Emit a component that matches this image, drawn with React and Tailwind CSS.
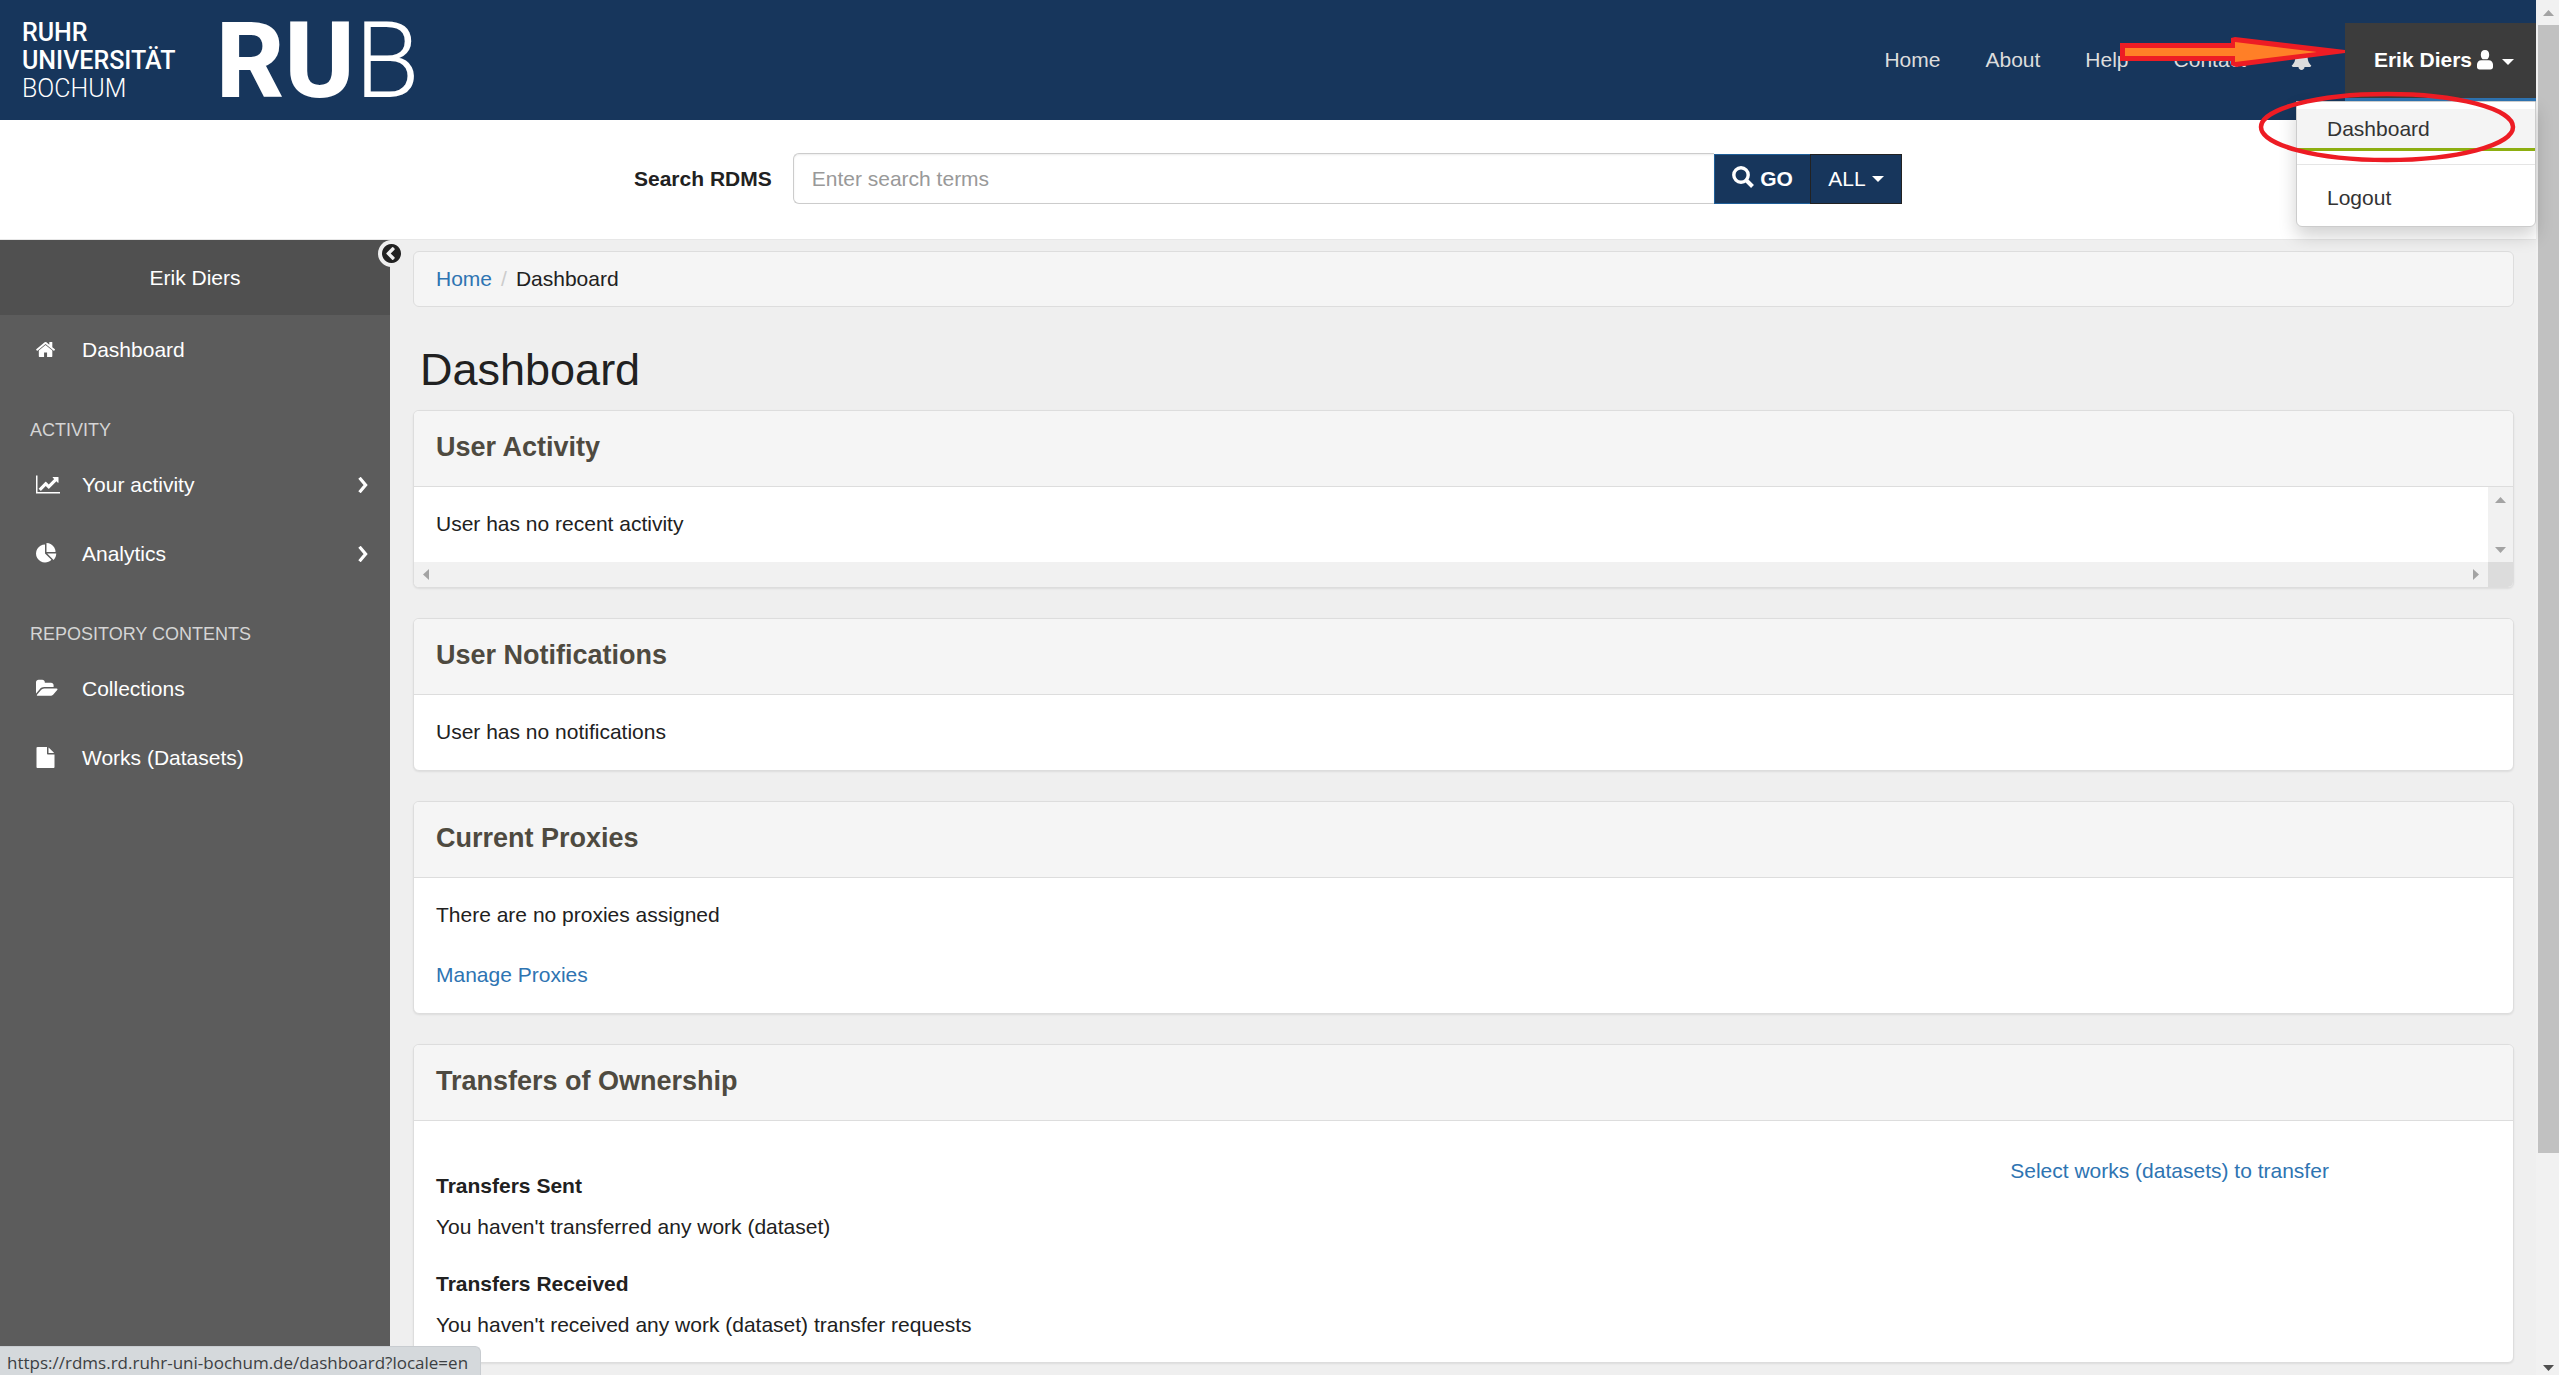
const icons = {
  home: {
    box: '80 0 1792 1792',
    d: 'M1472 992v480q0 26-19 45t-45 19h-384v-384h-256v384h-384q-26 0-45-19t-19-45v-480q0-1 .5-3t.5-3l575-474 575 474q1 2 1 6zm223-69l-62 74q-8 9-21 11h-3q-13 0-21-7l-692-577-692 577q-12 8-24 7-13-2-21-11l-62-74q-8-10-7-23.5t11-21.5l719-599q32-26 76-26t76 26l244 204v-195q0-14 9-23t23-9h192q14 0 23 9t9 23v408l219 182q10 8 11 21.5t-7 23.5z',
  },
  lineChart: {
    box: '0 0 2048 1792',
    d: 'M2048 1536v128h-2048v-1536h128v1408h1920zm-128-1248v435q0 21-19.5 29.5t-35.5-7.5l-121-121-633 633q-10 10-23 10t-23-10l-233-233-416 416-192-192 585-585q10-10 23-10t23 10l233 233 464-464-121-121q-16-16-7.5-35.5t29.5-19.5h435q14 0 23 9t9 23z',
  },
  pieChart: {
    box: '0 0 1792 1792',
    d: 'M768 890l546 546q-106 108-247.5 168t-298.5 60q-209 0-385.5-103t-279.5-279.5-103-385.5 103-385.5 279.5-279.5 385.5-103v762zm187 6h773q0 157-60 298.5t-168 247.5zm709-128h-768v-768q209 0 385.5 103t279.5 279.5 103 385.5z',
  },
  folderOpen: {
    box: '0 0 1920 1792',
    d: 'M1879 952q0 31-31 66l-336 396q-43 51-120.5 86.5t-143.5 35.5h-1088q-34 0-60.5-13t-26.5-43q0-31 31-66l336-396q43-51 120.5-86.5t143.5-35.5h1088q34 0 60.5 13t26.5 43zm-343-344v160h-832q-94 0-197 47.5t-164 119.5l-337 396-5 6q0-4-.5-12.5t-.5-12.5v-960q0-92 66-158t158-66h320q92 0 158 66t66 158v32h544q92 0 158 66t66 158z',
  },
  file: {
    box: '128 0 1536 1792',
    d: 'M1152 512v-472q22 14 36 28l408 408q14 14 28 36h-472zm-128 32q0 40 28 68t68 28h544v1056q0 40-28 68t-68 28h-1344q-40 0-68-28t-28-68v-1600q0-40 28-68t68-28h800v544z',
  },
  bell: {
    box: '0 0 1792 1792',
    d: 'M1728 1408q0 52-38 90t-90 38h-448q0 106-75 181t-181 75-181-75-75-181h-448q-52 0-90-38t-38-90q50-42 91-88t85-119.5 74.5-158.5 50-206 19.5-260q0-152 117-282.5t307-158.5q-8-19-8-39 0-40 28-68t68-28 68 28 28 68q0 20-8 39 190 28 307 158.5t117 282.5q0 139 19.5 260t50 206 74.5 158.5 85 119.5 91 88z',
  },
  circleLeft: {
    box: '128 128 1536 1536',
    d: 'M1037 1395l102-102q19-19 19-45t-19-45l-307-307 307-307q19-19 19-45t-19-45l-102-102q-19-19-45-19t-45 19l-454 454q-19 19-19 45t19 45l454 454q19 19 45 19t45-19zm627-499q0 209-103 385.5t-279.5 279.5-385.5 103-385.5-103-279.5-279.5-103-385.5 103-385.5 279.5-279.5 385.5-103 385.5 103 279.5 279.5 103 385.5z',
  },
};

const Icon = ({ name, className }) => (
  <svg viewBox={icons[name].box} fill="currentColor" className={className} aria-hidden="true">
    <path d={icons[name].d} />
  </svg>
);

const Caret = () => (
  <svg viewBox="0 0 12 6" className="w-3 h-[6px]" fill="currentColor" aria-hidden="true">
    <path d="M0 0h12L6 6z" />
  </svg>
);

const Triangle = ({ d }) => (
  <svg viewBox="0 0 11 11" className="w-[11px] h-[11px]" fill="currentColor" aria-hidden="true">
    <path d={d} />
  </svg>
);

const UP = 'M0 9L5.5 3L11 9z';
const DOWN = 'M0 3L5.5 9L11 3z';
const LEFT = 'M8 0L2 5.500L8 11z';
const RIGHT = 'M3 0L9 5.500L3 11z';

const Header = () => (
  <header className="relative h-[120px] shrink-0 bg-[#17365c] flex items-start justify-between">
    <a href="#" className="flex pl-[22px] h-full font-[Roboto,sans-serif] text-white">
      <span className="w-[194px] pt-[19px] text-[25px] leading-7 font-medium">
        RUHR<br />UNIVERSITÄT<br /><span className="font-light">BOCHUM</span>
      </span>
      <span className="text-[106px] leading-[122px] font-extrabold">
        RU<span className="font-light">B</span>
      </span>
    </a>

    <nav className="flex pt-[23px] text-[#dddddd]">
      <div className="flex items-center gap-[45px] h-[73px] pr-[33px]">
        <a href="#">Home</a>
        <a href="#">About</a>
        <a href="#">Help</a>
        <a href="#">Contact</a>
        <a href="#" aria-label="Notifications">
          <Icon name="bell" className="w-[21px] h-[21px]" />
        </a>
      </div>
      <div className="relative">
        <button className="flex items-center h-[78px] pb-[2px] pl-[29px] pr-[22px] bg-[#3c3c3c] border-b-3 border-[#2e74b2] text-white font-bold">
          Erik Diers
          <svg viewBox="0 0 16 20" className="w-4 h-5 ml-[5px]" fill="currentColor" aria-hidden="true">
            <path d="M8 0c2.800 0 4.200 2.100 4.200 4.700 0 2-.8 3.700-1.900 4.600h-4.600C4.600 8.400 3.800 6.700 3.800 4.700 3.800 2.100 5.200 0 8 0zM4.200 10.200h7.600c2.400 0 4.200 2 4.200 4.300v2.500c0 1.600-1 2.500-2.500 2.500h-11C1 19.500 0 18.600 0 17v-2.500c0-2.300 1.800-4.300 4.200-4.300z" />
          </svg>
          <span className="ml-[9px] mt-1"><Caret /></span>
        </button>
        <ul className="absolute z-10 top-[78px] right-0 w-60 pt-[7px] pb-[6px] bg-white border border-[#cccccc] rounded-b-md shadow-[0_9px_18px_rgba(0,0,0,0.18)] text-[#333333]">
          <li>
            <a href="#" className="block px-[30px] leading-[39px] bg-[#f4f4f4] border-b-3 border-[#8dae10]">Dashboard</a>
          </li>
          <li className="my-[13px] h-px bg-[#e5e5e5]" />
          <li>
            <a href="#" className="block px-[30px] leading-[39px] border-b-3 border-transparent">Logout</a>
          </li>
        </ul>
      </div>
    </nav>

    {/* arrow and ellipse highlighting the dashboard entry */}
    <svg viewBox="0 0 440 170" className="absolute z-20 top-0 right-0 w-[440px] h-[170px] pointer-events-none" aria-hidden="true">
      <path d="M24 43H135V38L139 37L249 50V53L140 67L135 65V61H24z" fill="#ed1c24" />
      <path d="M29 48H139V42L221 52L139 62V56H29z" fill="#ff7f27" />
      <ellipse cx="291" cy="127" rx="126" ry="33" fill="none" stroke="#ed1c24" strokeWidth="4.500" />
    </svg>
  </header>
);

const SearchBar = () => (
  <div className="h-[120px] shrink-0 bg-white border-b border-[#e7e7e7]">
    <form className="w-1/2 mx-auto pt-[33px] flex items-start">
      <label htmlFor="search" className="pr-[21px] leading-[51px] font-bold whitespace-nowrap">Search RDMS</label>
      <input
        id="search"
        type="text"
        placeholder="Enter search terms"
        className="flex-1 min-w-0 h-[51px] px-[18px] bg-white border border-r-0 border-[#cccccc] rounded-l-md shadow-[inset_0_1px_2px_rgba(0,0,0,0.08)] placeholder:text-[#999999]"
      />
      <button type="button" className="mt-px h-[50px] w-24 flex items-center justify-center gap-[6px] bg-[#17365c] border border-r-0 border-[#1f5f98] text-white font-bold">
        <svg viewBox="0 0 22 22" className="w-[22px] h-[22px] mb-1" fill="none" stroke="currentColor" aria-hidden="true">
          <circle cx="9" cy="9" r="7.200" strokeWidth="3.400" />
          <path d="M14 14L20.500 20.500" strokeWidth="4" />
        </svg>
        GO
      </button>
      <button type="button" className="mt-px h-[50px] w-[92px] flex items-center justify-center gap-[6px] bg-[#17365c] border border-[#222222] text-white">
        ALL
        <Caret />
      </button>
    </form>
  </div>
);

const SideLink = ({ icon, size, label, expandable }) => (
  <li>
    <a href="#" className="flex items-center h-[69px] pl-9 pr-[22px]">
      <span className="w-[46px]">
        <Icon name={icon} className={size} />
      </span>
      <span className="flex-1">{label}</span>
      {expandable && (
        <svg viewBox="0 0 10 16" className="w-[10px] h-4" fill="none" stroke="currentColor" strokeWidth="3.200" aria-hidden="true">
          <path d="M1.500 .8L7.600 8L1.500 15.200" />
        </svg>
      )}
    </a>
  </li>
);

const SideHeading = ({ children }) => (
  <li className="pl-[30px] pt-[31px] pb-[5px] text-[18px] leading-[30px] text-[#d5d5d5]">{children}</li>
);

const Sidebar = () => (
  <aside className="relative w-[390px] shrink-0 bg-[#5c5c5c] text-white">
    <div className="h-[75px] leading-[75px] text-center bg-[#505050]">Erik Diers</div>
    <button aria-label="Collapse menu" className="absolute top-0 right-[-15px] w-[27px] h-[27px] rounded-full bg-[#efefef] flex items-center justify-center text-[#212121]">
      <Icon name="circleLeft" className="w-[19px] h-[19px]" />
    </button>
    <ul>
      <SideLink icon="home" size="w-[21px] h-[21px]" label="Dashboard" />
      <SideHeading>ACTIVITY</SideHeading>
      <SideLink icon="lineChart" size="w-6 h-[21px]" label="Your activity" expandable />
      <SideLink icon="pieChart" size="w-[21px] h-[21px]" label="Analytics" expandable />
      <SideHeading>REPOSITORY CONTENTS</SideHeading>
      <SideLink icon="folderOpen" size="w-[22px] h-[21px]" label="Collections" />
      <SideLink icon="file" size="w-[19px] h-[21px]" label="Works (Datasets)" />
    </ul>
  </aside>
);

const Panel = ({ title, children }) => (
  <section className="mb-[30px] bg-white border border-[#dddddd] rounded-md overflow-hidden shadow-[0_1px_2px_rgba(0,0,0,0.08)]">
    <h2 className="px-[22px] pt-[21px] pb-6 bg-[#f5f5f5] border-b border-[#dddddd] text-[27px] leading-[30px] font-bold text-[#4e4a40]">
      {title}
    </h2>
    {children}
  </section>
);

const Content = () => (
  <main className="flex-1 min-w-0 pl-[23px] pr-[22px] pt-[11px]">
    <nav className="flex px-[22px] py-3 bg-[#f5f5f5] border border-[#dddddd] rounded-md">
      <a href="#" className="text-[#2e74b2]">Home</a>
      <span className="px-[9px] text-[#cccccc]">/</span>
      <span>Dashboard</span>
    </nav>
    <h1 className="pl-[7px] pt-[38px] pb-[15px] text-[45px] leading-[50px]">Dashboard</h1>

    <Panel title="User Activity">
      <div className="flex">
        <p className="flex-1 px-[22px] pt-[22px] pb-[23px]">User has no recent activity</p>
        <div className="w-[25px] py-[7px] flex flex-col items-center justify-between bg-[#f1f1f1] text-[#a3a3a3]">
          <Triangle d={UP} />
          <Triangle d={DOWN} />
        </div>
      </div>
      <div className="flex h-[25px]">
        <div className="flex-1 px-[7px] flex items-center justify-between bg-[#f1f1f1] text-[#a3a3a3]">
          <Triangle d={LEFT} />
          <Triangle d={RIGHT} />
        </div>
        <div className="w-[25px] bg-[#dcdcdc]" />
      </div>
    </Panel>

    <Panel title="User Notifications">
      <p className="px-[22px] pt-[22px] pb-[23px]">User has no notifications</p>
    </Panel>

    <Panel title="Current Proxies">
      <div className="px-[22px] pt-[22px] pb-[23px]">
        <p className="mb-[30px]">There are no proxies assigned</p>
        <a href="#" className="block text-[#2e74b2]">Manage Proxies</a>
      </div>
    </Panel>

    <Panel title="Transfers of Ownership">
      <div className="grid grid-cols-4">
        <div className="col-span-3 px-[22px] pt-[50px] pb-[22px]">
          <h3 className="font-bold mb-[11px]">Transfers Sent</h3>
          <p className="mb-[27px]">You haven't transferred any work (dataset)</p>
          <h3 className="font-bold mb-[11px]">Transfers Received</h3>
          <p>You haven't received any work (dataset) transfer requests</p>
        </div>
        <div className="px-[22px] pt-[35px]">
          <a href="#" className="text-[#2e74b2]">Select works (datasets) to transfer</a>
        </div>
      </div>
    </Panel>
  </main>
);

const App = () => (
  <div className="h-screen overflow-hidden flex font-['Liberation_Sans',Arial,sans-serif] text-[21px] leading-[30px] text-[#212121]">
    <div className="flex-1 min-w-0 flex flex-col">
      <Header />
      <SearchBar />
      <div className="flex-1 flex bg-[#efefef]">
        <Sidebar />
        <Content />
      </div>
    </div>

    {/* page scroll bar */}
    <div className="w-[23px] pl-[2px] flex flex-col items-center bg-[#f1f1f1]">
      <div className="h-[25px] flex items-center text-[#a3a3a3]"><Triangle d={UP} /></div>
      <div className="w-full h-[82%] bg-[#c1c1c1]" />
      <div className="mt-auto pb-[2px] text-[#505050]"><Triangle d={DOWN} /></div>
    </div>

    <div className="fixed z-30 bottom-0 left-0 h-[29px] pl-[7px] pr-3 bg-[#d5d9dc] border-t border-r border-[#c8ccd0] rounded-tr-md font-['Open_Sans',sans-serif] text-[17px] leading-[32px] text-[#3c4043]">
      https://rdms.rd.ruhr-uni-bochum.de/dashboard?locale=en
    </div>
  </div>
);

export default App;
